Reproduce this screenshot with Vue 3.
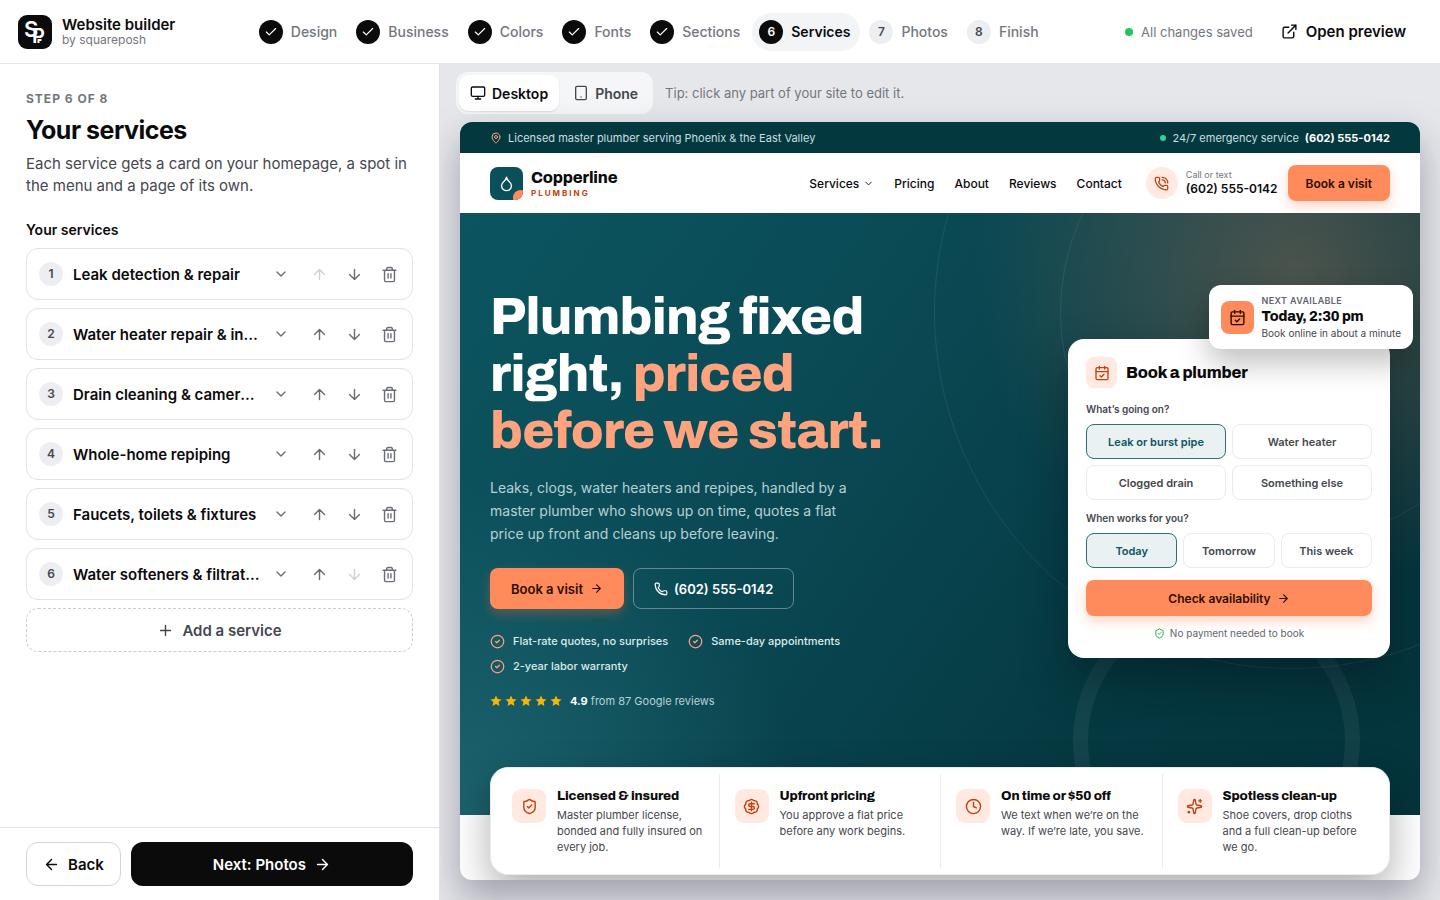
<template>
  <div class="builder">
    <header class="topbar">
      <div class="brand">
        <svg class="brand-mark" width="34" height="34" viewBox="0 0 34 34" aria-hidden="true">
          <rect width="34" height="34" rx="9" fill="#0b0b0c" />
          <text x="6" y="22" font-size="22" font-weight="600" fill="#fff">S</text>
          <text x="14" y="28" font-size="20" font-weight="600" fill="#fff">P</text>
          <path d="M20.5 28v-3h3" fill="none" stroke="#fff" stroke-width="2" />
        </svg>
        <div>
          <div class="brand-name">Website builder</div>
          <div class="brand-by">by squareposh</div>
        </div>
      </div>

      <nav class="steps" aria-label="Steps">
        <button
          v-for="(step, i) in steps"
          :key="step"
          class="step"
          :class="{ done: i + 1 < current, active: i + 1 === current }"
        >
          <span class="step-dot">
            <Icon v-if="i + 1 < current" name="check" :size="14" />
            <template v-else>{{ i + 1 }}</template>
          </span>
          <span>{{ step }}</span>
        </button>
      </nav>

      <div class="topbar-right">
        <span class="saved"><i class="saved-dot"></i>All changes saved</span>
        <button class="open-preview"><Icon name="external" :size="17" />Open preview</button>
      </div>
    </header>

    <div class="main">
      <aside class="panel">
        <div class="panel-body">
          <div class="eyebrow">Step {{ current }} of {{ steps.length }}</div>
          <h1 class="panel-title">Your services</h1>
          <p class="panel-text">Each service gets a card on your homepage, a spot in the menu and a page of its own.</p>
          <h2 class="panel-label">Your services</h2>
          <ul class="services">
            <li v-for="(service, i) in services" :key="service" class="service">
              <button class="service-toggle">
                <span class="service-num">{{ i + 1 }}</span>
                <span class="service-name">{{ service }}</span>
                <Icon name="chevronDown" :size="16" />
              </button>
              <button class="icon-btn" aria-label="Move up" :disabled="i === 0" @click="move(i, -1)">
                <Icon name="arrowUp" :size="17" />
              </button>
              <button class="icon-btn" aria-label="Move down" :disabled="i === services.length - 1" @click="move(i, 1)">
                <Icon name="arrowDown" :size="17" />
              </button>
              <button class="icon-btn" aria-label="Remove" @click="services.splice(i, 1)">
                <Icon name="trash" :size="17" />
              </button>
            </li>
          </ul>
          <button class="add" @click="services.push('New service')"><Icon name="plus" :size="17" />Add a service</button>
        </div>
        <div class="panel-footer">
          <button class="back"><Icon name="arrowLeft" :size="17" />Back</button>
          <button class="next">Next: Photos<Icon name="arrowRight" :size="17" /></button>
        </div>
      </aside>

      <section class="stage">
        <div class="toolbar">
          <div class="segmented">
            <button :class="{ on: device === 'desktop' }" @click="device = 'desktop'">
              <Icon name="monitor" :size="16" />Desktop
            </button>
            <button :class="{ on: device === 'phone' }" @click="device = 'phone'">
              <Icon name="phoneDevice" :size="16" />Phone
            </button>
          </div>
          <span class="tip">Tip: click any part of your site to edit it.</span>
        </div>

        <div class="site">
          <div class="strip">
            <span class="strip-item pin"><Icon name="pin" :size="12" /><span>Licensed master plumber serving Phoenix &amp; the East Valley</span></span>
            <span class="strip-item"><i class="strip-dot"></i>24/7 emergency service <b>(602) 555-0142</b></span>
          </div>

          <div class="site-header">
            <div class="logo">
              <span class="logo-mark"><Icon name="droplet" :size="17" /></span>
              <div>
                <div class="logo-name">Copperline</div>
                <div class="logo-sub">Plumbing</div>
              </div>
            </div>
            <nav class="site-nav">
              <a href="#">Services<Icon name="chevronDown" :size="11" /></a>
              <a href="#">Pricing</a>
              <a href="#">About</a>
              <a href="#">Reviews</a>
              <a href="#">Contact</a>
            </nav>
            <div class="call">
              <span class="call-icon"><Icon name="phoneCall" :size="15" /></span>
              <div>
                <div class="call-label">Call or text</div>
                <div class="call-number">(602) 555-0142</div>
              </div>
            </div>
            <button class="cta header-cta">Book a visit</button>
          </div>

          <div class="hero">
            <i class="ring ring-large"></i>
            <i class="ring ring-mid"></i>
            <i class="ring ring-thick"></i>

            <div class="hero-copy">
              <h2>Plumbing fixed right, <em>priced before we start.</em></h2>
              <p>Leaks, clogs, water heaters and repipes, handled by a master plumber who shows up on time, quotes a flat price up front and cleans up before leaving.</p>
              <div class="hero-actions">
                <button class="cta hero-cta">Book a visit<Icon name="arrowRight" :size="13" /></button>
                <button class="ghost"><Icon name="phone" :size="14" />(602) 555-0142</button>
              </div>
              <ul class="checks">
                <li v-for="item in checks" :key="item"><Icon name="circleCheck" :size="15" />{{ item }}</li>
              </ul>
              <div class="rating">
                <span class="stars">
                  <svg v-for="n in 5" :key="n" width="12" height="12" viewBox="0 0 24 24" fill="#f5b50a" aria-hidden="true">
                    <path d="M12 1l3.2 7 7.8.9-5.8 5.2 1.6 7.7L12 17.9l-6.8 3.9 1.6-7.7L1 8.9 8.8 8z" />
                  </svg>
                </span>
                <span><b>4.9</b> from 87 Google reviews</span>
              </div>
            </div>

            <div class="booking">
              <div class="available">
                <span class="available-icon"><Icon name="calendar" :size="17" /></span>
                <div>
                  <div class="available-label">Next available</div>
                  <div class="available-time">Today, 2:30 pm</div>
                  <div class="available-note">Book online in about a minute</div>
                </div>
              </div>
              <div class="booking-head">
                <span class="booking-icon"><Icon name="calendar" :size="16" /></span>
                <h3>Book a plumber</h3>
              </div>
              <div class="question">What’s going on?</div>
              <div class="options two">
                <button
                  v-for="o in problems"
                  :key="o"
                  :class="{ picked: o === problem }"
                  :aria-pressed="o === problem"
                  @click="problem = o"
                >{{ o }}</button>
              </div>
              <div class="question">When works for you?</div>
              <div class="options three">
                <button
                  v-for="o in times"
                  :key="o"
                  :class="{ picked: o === time }"
                  :aria-pressed="o === time"
                  @click="time = o"
                >{{ o }}</button>
              </div>
              <button class="cta booking-cta">Check availability<Icon name="arrowRight" :size="13" /></button>
              <div class="booking-note"><Icon name="shield" :size="11" />No payment needed to book</div>
            </div>
          </div>

          <div class="perks">
            <div v-for="perk in perks" :key="perk.title" class="perk">
              <span class="perk-icon"><Icon :name="perk.icon" :size="17" /></span>
              <div>
                <h3>{{ perk.title }}</h3>
                <p>{{ perk.text }}</p>
              </div>
            </div>
          </div>
        </div>
      </section>
    </div>
  </div>
</template>

<script setup>
import { h, ref } from 'vue'

const paths = {
  check: '<path d="M20 6 9 17l-5-5"/>',
  chevronDown: '<path d="m6 9 6 6 6-6"/>',
  arrowUp: '<path d="m5 12 7-7 7 7M12 19V5"/>',
  arrowDown: '<path d="M12 5v14m7-7-7 7-7-7"/>',
  arrowLeft: '<path d="m12 19-7-7 7-7M19 12H5"/>',
  arrowRight: '<path d="M5 12h14m-7-7 7 7-7 7"/>',
  plus: '<path d="M5 12h14M12 5v14"/>',
  trash: '<path d="M10 11v6M14 11v6M19 6v14a2 2 0 0 1-2 2H7a2 2 0 0 1-2-2V6M3 6h18M8 6V4a2 2 0 0 1 2-2h4a2 2 0 0 1 2 2v2"/>',
  external: '<path d="M15 3h6v6M10 14 21 3M18 13v6a2 2 0 0 1-2 2H5a2 2 0 0 1-2-2V8a2 2 0 0 1 2-2h6"/>',
  monitor: '<rect width="20" height="14" x="2" y="3" rx="2"/><path d="M8 21h8M12 17v4"/>',
  phoneDevice: '<rect width="16" height="20" x="4" y="2" rx="2"/><path d="M12 18h.01"/>',
  pin: '<path d="M20 10c0 4.993-5.539 10.193-7.399 11.799a1 1 0 0 1-1.202 0C9.539 20.193 4 14.993 4 10a8 8 0 0 1 16 0"/><circle cx="12" cy="10" r="3"/>',
  droplet: '<path d="M12 22a7 7 0 0 0 7-7c0-2-1-3.9-3-5.5s-3.5-4-4-6.5c-.5 2.5-2 4.9-4 6.5C6 11.1 5 13 5 15a7 7 0 0 0 7 7z"/>',
  phone: '<path d="M13.832 16.568a1 1 0 0 0 1.213-.303l.355-.465A2 2 0 0 1 17 15h3a2 2 0 0 1 2 2v3a2 2 0 0 1-2 2A18 18 0 0 1 2 4a2 2 0 0 1 2-2h3a2 2 0 0 1 2 2v3a2 2 0 0 1-.8 1.6l-.468.351a1 1 0 0 0-.292 1.233 14 14 0 0 0 6.392 6.384"/>',
  circleCheck: '<circle cx="12" cy="12" r="10"/><path d="m9 12 2 2 4-4"/>',
  calendar: '<path d="M8 2v4M16 2v4"/><rect width="18" height="18" x="3" y="4" rx="2"/><path d="M3 10h18m-12 6 2 2 4-4"/>',
  shield: '<path d="M20 13c0 5-3.5 7.5-7.66 8.95a1 1 0 0 1-.67-.01C7.5 20.5 4 18 4 13V6a1 1 0 0 1 1-1c2 0 4.5-1.2 6.24-2.72a1.17 1.17 0 0 1 1.52 0C14.51 3.81 17 5 19 5a1 1 0 0 1 1 1z"/><path d="m9 12 2 2 4-4"/>',
  dollar: '<path d="M3.85 8.62a4 4 0 0 1 4.78-4.77 4 4 0 0 1 6.74 0 4 4 0 0 1 4.78 4.78 4 4 0 0 1 0 6.74 4 4 0 0 1-4.77 4.78 4 4 0 0 1-6.75 0 4 4 0 0 1-4.78-4.77 4 4 0 0 1 0-6.76Z"/><path d="M16 8h-6a2 2 0 1 0 0 4h4a2 2 0 1 1 0 4H8M12 18V6"/>',
  clock: '<circle cx="12" cy="12" r="10"/><path d="M12 6v6l4 2"/>',
  sparkles: '<path d="M11.017 2.814a1 1 0 0 1 1.966 0l1.051 5.558a2 2 0 0 0 1.594 1.594l5.558 1.051a1 1 0 0 1 0 1.966l-5.558 1.051a2 2 0 0 0-1.594 1.594l-1.051 5.558a1 1 0 0 1-1.966 0l-1.051-5.558a2 2 0 0 0-1.594-1.594l-5.558-1.051a1 1 0 0 1 0-1.966l5.558-1.051a2 2 0 0 0 1.594-1.594zM20 2v4M22 4h-4"/><circle cx="4" cy="20" r="1"/>',
}
paths.phoneCall = paths.phone + '<path d="M13 2a9 9 0 0 1 9 9M13 6a5 5 0 0 1 5 5"/>'

const Icon = ({ name, size }) =>
  h('svg', {
    width: size,
    height: size,
    viewBox: '0 0 24 24',
    fill: 'none',
    stroke: 'currentColor',
    'stroke-width': 2,
    'stroke-linecap': 'round',
    'stroke-linejoin': 'round',
    'aria-hidden': true,
    class: 'icon',
    innerHTML: paths[name],
  })
Icon.props = ['name', 'size']

const steps = ['Design', 'Business', 'Colors', 'Fonts', 'Sections', 'Services', 'Photos', 'Finish']
const current = 6
const device = ref('desktop')

const services = ref([
  'Leak detection & repair',
  'Water heater repair & installation',
  'Drain cleaning & camera inspection',
  'Whole-home repiping',
  'Faucets, toilets & fixtures',
  'Water softeners & filtration',
])

function move(i, by) {
  const [item] = services.value.splice(i, 1)
  services.value.splice(i + by, 0, item)
}

const checks = ['Flat-rate quotes, no surprises', 'Same-day appointments', '2-year labor warranty']
const problems = ['Leak or burst pipe', 'Water heater', 'Clogged drain', 'Something else']
const problem = ref(problems[0])
const times = ['Today', 'Tomorrow', 'This week']
const time = ref(times[0])

const perks = [
  { icon: 'shield', title: 'Licensed & insured', text: 'Master plumber license, bonded and fully insured on every job.' },
  { icon: 'dollar', title: 'Upfront pricing', text: 'You approve a flat price before any work begins.' },
  { icon: 'clock', title: 'On time or $50 off', text: 'We text when we’re on the way. If we’re late, you save.' },
  { icon: 'sparkles', title: 'Spotless clean-up', text: 'Shoe covers, drop cloths and a full clean-up before we go.' },
]
</script>

<style>
body {
  background: #fff;
}
</style>

<style scoped>
.builder {
  height: 100vh;
  display: flex;
  flex-direction: column;
  font-family: Inter, "Liberation Sans", sans-serif;
  color: #0b0b0c;
}
.builder *, .builder *::after { box-sizing: border-box; }
h1, h2, h3, p, ul { margin: 0; padding: 0; }
ul { list-style: none; }
button {
  font-family: inherit;
  color: inherit;
  background: none;
  border: none;
  padding: 0;
  cursor: pointer;
  white-space: nowrap;
}
.icon { flex: none; }

/* top bar */
.topbar {
  flex: none;
  height: 64px;
  padding: 0 18px;
  display: flex;
  align-items: center;
  justify-content: space-between;
  border-bottom: 1px solid #e6e7ea;
}
.brand { display: flex; align-items: center; gap: 10px; }
.brand-name { font-size: 15px; font-weight: 600; line-height: 16px; }
.brand-by { font-size: 12px; line-height: 14px; color: #74767e; }
.steps { display: flex; gap: 2px; }
.step {
  display: flex;
  align-items: center;
  gap: 8px;
  padding: 7px 10px 7px 7px;
  border-radius: 19px;
  font-size: 14px;
  font-weight: 500;
  color: #74767e;
}
.step-dot {
  width: 24px;
  height: 24px;
  border-radius: 50%;
  display: flex;
  align-items: center;
  justify-content: center;
  font-size: 12px;
  font-weight: 600;
  background: #eceef1;
  color: #45474e;
}
.done .step-dot, .active .step-dot { background: #0b0b0c; color: #fff; }
.step.active { background: #f3f4f6; color: #0b0b0c; font-weight: 600; }
.topbar-right { display: flex; align-items: center; gap: 12px; }
.saved { display: flex; align-items: center; gap: 8px; font-size: 13px; color: #74767e; }
.saved-dot { width: 8px; height: 8px; border-radius: 50%; background: #22c55e; }
.open-preview {
  display: flex;
  align-items: center;
  gap: 8px;
  padding: 9px 16px;
  font-size: 15px;
  font-weight: 600;
}

/* left panel */
.main { flex: 1; min-height: 0; display: flex; }
.panel {
  flex: none;
  width: 440px;
  display: flex;
  flex-direction: column;
  border-right: 1px solid #e0e2e5;
}
.panel-body { flex: 1; min-height: 0; overflow: hidden; padding: 27px 26px; }
.eyebrow {
  font-size: 12px;
  line-height: 16px;
  font-weight: 700;
  letter-spacing: 1px;
  text-transform: uppercase;
  color: #74767e;
}
.panel-title { margin-top: 7px; font-size: 25px; line-height: 32px; font-weight: 700; letter-spacing: -0.02em; }
.panel-text { margin-top: 7px; font-size: 15px; line-height: 22px; color: #45474e; }
.panel-label { margin-top: 24px; font-size: 14px; line-height: 18px; font-weight: 600; }
.services { margin-top: 9px; display: flex; flex-direction: column; gap: 8px; }
.service {
  height: 52px;
  display: flex;
  align-items: stretch;
  padding-right: 5px;
  border: 1px solid #e1e3e6;
  border-radius: 12px;
}
.service-toggle {
  flex: 1;
  min-width: 0;
  display: flex;
  align-items: center;
  gap: 10px;
  padding: 0 13px 0 12px;
  color: #6a6d75;
}
.service-num {
  flex: none;
  width: 24px;
  height: 24px;
  line-height: 24px;
  border-radius: 50%;
  background: #eceef1;
  font-size: 12px;
  font-weight: 600;
  color: #45474e;
}
.service-name {
  flex: 1;
  overflow: hidden;
  text-overflow: ellipsis;
  text-align: left;
  font-size: 15px;
  font-weight: 600;
  color: #0b0b0c;
}
.icon-btn { width: 35px; display: flex; align-items: center; justify-content: center; color: #6a6d75; }
.icon-btn:disabled { opacity: 0.3; cursor: default; }
.add {
  margin-top: 8px;
  width: 100%;
  height: 44px;
  display: flex;
  align-items: center;
  justify-content: center;
  gap: 8px;
  border: 1px dashed #c9ccd1;
  border-radius: 12px;
  font-size: 15px;
  font-weight: 600;
  color: #45474e;
}
.panel-footer {
  flex: none;
  display: flex;
  gap: 10px;
  padding: 14px 26px;
  border-top: 1px solid #e1e3e6;
}
.back, .next {
  height: 44px;
  display: flex;
  align-items: center;
  justify-content: center;
  gap: 8px;
  border-radius: 12px;
  font-size: 15px;
  font-weight: 600;
}
.back { padding: 0 16px; border: 1px solid #d3d5d9; }
.next { flex: 1; background: #0b0b0c; color: #fff; }

/* preview stage */
.stage {
  flex: 1;
  min-width: 0;
  display: flex;
  flex-direction: column;
  padding: 8px 20px 20px;
  background: #e6e7eb;
  overflow: hidden;
}
.toolbar { display: flex; align-items: center; gap: 12px; margin-left: -4px; }
.segmented { display: flex; padding: 3px; border-radius: 12px; background: #f5f6f8; }
.segmented button {
  height: 36px;
  display: flex;
  align-items: center;
  gap: 6px;
  padding: 0 11px;
  border-radius: 9px;
  font-size: 14px;
  font-weight: 600;
  color: #45474e;
}
.segmented button + button { padding: 0 12px 0 14px; }
.segmented .on { background: #fff; color: #0b0b0c; box-shadow: 0 1px 2px rgba(0, 0, 0, 0.1); }
.tip { font-size: 13px; color: #74767e; }
.site {
  flex: 1;
  min-height: 0;
  margin-top: 8px;
  overflow: hidden;
  border-radius: 12px;
  background: #fff;
  box-shadow: 0 18px 38px rgba(20, 24, 50, 0.34);
}
.cta {
  display: flex;
  align-items: center;
  justify-content: center;
  border-radius: 8px;
  background: #ff8a5b;
  color: #2c0f04;
  font-weight: 600;
  box-shadow: 0 5px 12px rgba(255, 110, 60, 0.3);
}
.strip {
  height: 31px;
  padding: 0 30px;
  display: flex;
  align-items: center;
  justify-content: space-between;
  background: #04383f;
  color: #c9dfe2;
  font-size: 11px;
}
.strip-item { display: flex; align-items: center; gap: 6px; }
.strip b { color: #fff; font-weight: 700; }
.pin { color: #ffa27e; }
.pin span { color: #c9dfe2; }
.strip-dot { width: 6px; height: 6px; border-radius: 50%; background: #34d399; }
.site-header { height: 60px; padding: 0 30px; display: flex; align-items: center; }
.logo { display: flex; align-items: center; gap: 8px; }
.logo-mark {
  position: relative;
  width: 33px;
  height: 33px;
  display: flex;
  align-items: center;
  justify-content: center;
  border-radius: 8px;
  background: #0b4f5a;
  color: #fff;
  overflow: hidden;
}
.logo-mark::after {
  content: '';
  position: absolute;
  right: -5px;
  bottom: -5px;
  width: 15px;
  height: 15px;
  border-radius: 50%;
  background: #ff8a5b;
}
.logo-name, h3, .available-time {
  font-family: Archivo, "Liberation Sans", sans-serif;
  font-weight: 800;
  letter-spacing: -0.01em;
}
.logo-name { font-size: 16px; line-height: 19px; }
.logo-sub {
  font-size: 8px;
  line-height: 12px;
  font-weight: 700;
  letter-spacing: 2px;
  text-transform: uppercase;
  color: #c2410c;
}
.site-nav { margin-left: auto; display: flex; gap: 20px; }
.site-nav a {
  display: flex;
  align-items: center;
  gap: 4px;
  font-size: 12px;
  font-weight: 500;
  color: #0b0b0c;
  text-decoration: none;
}
.call { display: flex; align-items: center; gap: 8px; margin-left: 24px; }
.call-icon {
  width: 32px;
  height: 32px;
  display: flex;
  align-items: center;
  justify-content: center;
  border-radius: 50%;
  background: #ffe9e0;
  color: #c2410c;
}
.call-label { font-size: 9px; line-height: 12px; color: #74767e; }
.call-number { font-size: 12px; line-height: 16px; font-weight: 600; }
.header-cta { margin-left: 10px; height: 36px; padding: 0 18px; font-size: 12px; }

/* hero */
.hero {
  position: relative;
  overflow: hidden;
  display: grid;
  grid-template-columns: 1fr 322px;
  align-items: center;
  padding: 75px 30px 106px;
  background:
    radial-gradient(circle at 87% 10%, rgba(255, 138, 91, 0.28), rgba(255, 138, 91, 0) 320px),
    radial-gradient(circle at 0% 100%, rgba(70, 150, 160, 0.3), rgba(70, 150, 160, 0) 340px),
    linear-gradient(125deg, #0b5560 0%, #0a4a55 35%, #053840 75%, #04343b 100%);
}
.ring { position: absolute; border-radius: 50%; border: 1px solid rgba(255, 255, 255, 0.08); }
.ring-large { width: 714px; height: 714px; right: -228px; top: -258px; }
.ring-mid { width: 462px; height: 462px; right: -102px; top: -132px; }
.ring-thick { width: 287px; height: 287px; right: 60px; top: 384px; border: 15px solid rgba(255, 255, 255, 0.06); }
.hero-copy { position: relative; max-width: 400px; }
.hero h2 {
  font-family: Archivo, "Liberation Sans", sans-serif;
  font-size: 52px;
  line-height: 57px;
  font-weight: 800;
  letter-spacing: -0.015em;
  color: #fff;
}
.hero h2 em { font-style: normal; color: #ffa27e; }
.hero p { margin-top: 17px; max-width: 376px; font-size: 14px; line-height: 23px; color: #b8d0d4; }
.hero-actions { display: flex; gap: 9px; margin-top: 23px; }
.hero-cta { height: 41px; padding: 0 21px; gap: 7px; font-size: 13px; }
.ghost {
  height: 41px;
  display: flex;
  align-items: center;
  gap: 6px;
  padding: 0 20px;
  border: 1px solid rgba(255, 255, 255, 0.35);
  border-radius: 8px;
  font-size: 13px;
  font-weight: 600;
  color: #fff;
}
.checks { margin-top: 24px; display: flex; flex-wrap: wrap; gap: 9px 20px; }
.checks li {
  display: flex;
  align-items: center;
  gap: 8px;
  font-size: 11px;
  line-height: 16px;
  font-weight: 500;
  color: #dcebed;
}
.checks .icon { color: #ffa27e; }
.rating { margin-top: 19px; display: flex; align-items: center; gap: 8px; font-size: 11px; line-height: 16px; color: #b8d0d4; }
.rating b { color: #fff; }
.stars { display: flex; gap: 3px; }

/* booking card */
.booking {
  position: relative;
  padding: 18px;
  border-radius: 16px;
  background: #fff;
  box-shadow: 0 22px 46px rgba(0, 15, 20, 0.4);
}
.booking-head { display: flex; align-items: center; gap: 9px; }
.booking-head h3 { font-size: 16px; }
.booking-icon {
  width: 31px;
  height: 31px;
  display: flex;
  align-items: center;
  justify-content: center;
  border-radius: 8px;
  background: #ffe9e0;
  color: #c2410c;
}
.question { margin: 14px 0 8px; font-size: 10px; line-height: 14px; font-weight: 600; color: #45474e; }
.options + .question { margin-top: 11px; }
.options { display: grid; gap: 6px; }
.two { grid-template-columns: 1fr 1fr; }
.three { grid-template-columns: 1fr 1fr 1fr; }
.options button {
  height: 35px;
  border: 1px solid #e9ebed;
  border-radius: 8px;
  font-size: 11px;
  font-weight: 600;
  color: #45474e;
}
.options .picked { border-color: #2c6f79; background: #e9f1f2; color: #0b5560; }
.booking-cta { width: 100%; height: 36px; margin-top: 12px; gap: 6px; font-size: 12px; }
.booking-note {
  margin-top: 10px;
  display: flex;
  align-items: center;
  justify-content: center;
  gap: 5px;
  font-size: 10px;
  line-height: 14px;
  color: #63656c;
}
.booking-note .icon { color: #16a34a; }
.available {
  position: absolute;
  top: -54px;
  right: -23px;
  height: 64px;
  padding: 0 12px;
  display: flex;
  align-items: center;
  gap: 8px;
  border-radius: 12px;
  background: #fff;
  box-shadow: 0 14px 30px rgba(0, 0, 0, 0.25);
  white-space: nowrap;
}
.available-icon {
  width: 33px;
  height: 33px;
  display: flex;
  align-items: center;
  justify-content: center;
  border-radius: 8px;
  background: #ff8a5b;
  color: #2c0f04;
}
.available-label {
  font-size: 9px;
  line-height: 14px;
  font-weight: 600;
  letter-spacing: 0.04em;
  text-transform: uppercase;
  color: #63656c;
}
.available-time { font-size: 14px; line-height: 18px; }
.available-note { font-size: 10px; line-height: 14px; color: #45474e; }

/* perks */
.perks {
  position: relative;
  margin: -48px 30px 0;
  padding: 6px;
  display: grid;
  grid-template-columns: repeat(4, 1fr);
  border: 1px solid #e9ebed;
  border-radius: 18px;
  background: #fff;
  box-shadow: 0 16px 40px rgba(0, 0, 0, 0.32);
}
.perk { display: flex; gap: 11px; padding: 15px 15px 13px; }
.perk + .perk { border-left: 1px solid #e9ebed; }
.perk-icon {
  flex: none;
  width: 34px;
  height: 34px;
  display: flex;
  align-items: center;
  justify-content: center;
  border-radius: 9px;
  background: #ffe9e0;
  color: #c2410c;
}
.perk h3 { font-size: 13px; line-height: 14px; }
.perk p { margin-top: 4px; font-size: 11px; line-height: 16px; color: #45474e; }
</style>
